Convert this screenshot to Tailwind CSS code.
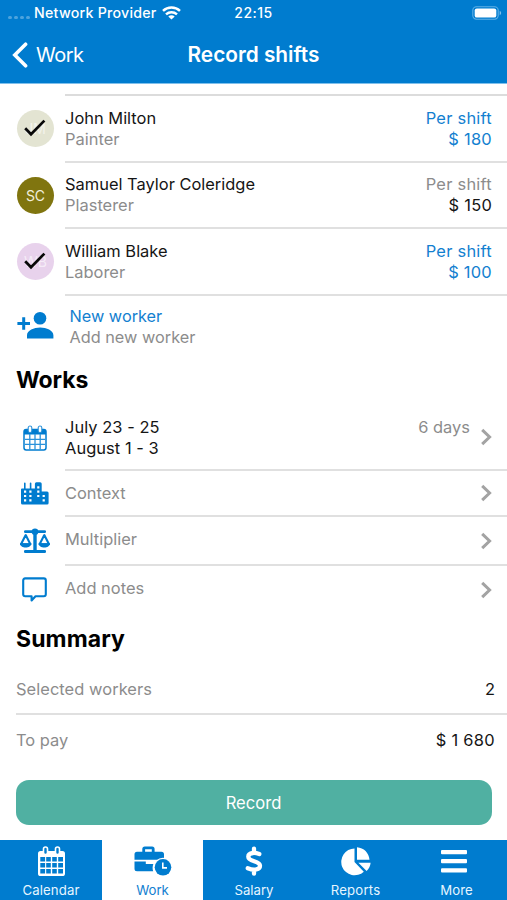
<!DOCTYPE html>
<html lang="en">
<head>
<meta charset="utf-8">
<title>Record shifts</title>
<script src="https://cdn.jsdelivr.net/npm/@tailwindcss/browser@4"></script>
</head>
<body class="bg-white">
<svg class="hidden">
  <symbol id="chev" viewBox="0 0 12 18"><path d="M2.2 1.8 9.6 9 2.2 16.2" fill="none" stroke="#a3a3a3" stroke-width="3"/></symbol>
  <symbol id="check" viewBox="0 0 22 18"><path d="M1.2 9.2 7 15.2 20.4 1.6" fill="none" stroke="#080808" stroke-width="2.7"/></symbol>
</svg>
<div class="flex h-[900px] w-[507px] flex-col overflow-hidden bg-white font-['Inter','Liberation_Sans',sans-serif] text-[16.45px] leading-[21px] text-[#151515]">
  <header class="h-[84px] shrink-0 border-b border-[#7fc0ec] bg-[#007ccf] text-white">
    <div class="grid h-[26px] grid-cols-[190px_127px_190px] items-center text-[14px] font-medium leading-[26px]">
      <div class="flex items-center pl-2 whitespace-nowrap">
        <div class="mt-2 flex w-[26px] shrink-0 gap-[2px]"><i class="h-[3px] w-[4px] rounded-full bg-white/30"></i><i class="h-[3px] w-[4px] rounded-full bg-white/30"></i><i class="h-[3px] w-[4px] rounded-full bg-white/30"></i><i class="h-[3px] w-[4px] rounded-full bg-white/30"></i></div>
        <span class="text-[14.2px] tracking-[0.25px]">Network Provider</span>
        <svg class="ml-[5px] h-[14px] w-[19px] shrink-0" viewBox="0 0 19 14" fill="none" stroke="#fff" stroke-width="2.5"><path d="M1 4.9C5.8.5 13.2.5 18 4.9M4 8.4c3.2-2.8 7.8-2.8 11 0"/><path d="M9.5 13.5 6.3 10.5c1.8-1.7 4.6-1.7 6.4 0Z" fill="#fff" stroke="none"/></svg>
      </div>
      <div class="text-center tracking-[0.5px]">22:15</div>
      <div class="flex justify-end pr-[5px]"><svg class="h-[14px] w-[30px]" viewBox="0 0 30 14"><rect x=".8" y=".8" width="25.4" height="12.4" rx="3.6" fill="none" stroke="#5fb0e6" stroke-width="1.1"/><rect x="2.7" y="2.4" width="21.6" height="9.2" rx="2.2" fill="#fff"/><path d="M27.700 4.800c2 .8 2 3.600 0 4.400Z" fill="#7fc0ec"/></svg></div>
    </div>
    <div class="grid h-[58px] grid-cols-[1fr_auto_1fr] items-center text-[20px]">
      <div class="flex items-center gap-2 pl-[12px]"><svg class="h-[26px] w-[16px]" viewBox="0 0 16 26"><path d="M13.600 2.200 2.800 13l10.800 10.800" fill="none" stroke="#fff" stroke-width="3.600" stroke-linecap="round"/></svg><span class="tracking-[-0.5px]">Work</span></div>
      <div class="pb-[2px] text-[20.800px] font-semibold">Record shifts</div><div></div>
    </div>
  </header>

  <main class="flex shrink-0 flex-col pt-[10px]">
    <div class="ml-[65px] h-[2px] bg-[#dcdcdc]"></div>
    <section class="flex h-[64.6px] items-center pt-px">
      <div class="ml-[17px] grid size-[37px] shrink-0 place-items-center rounded-full bg-[#e3e4d2] text-[14px] text-white/60"><span class="col-start-1 row-start-1">JM</span><svg class="z-10 col-start-1 row-start-1 mr-px mb-[2px] h-[18px] w-[22px]"><use href="#check"/></svg></div>
      <div class="ml-[11px] flex-1"><p>John Milton</p><p class="text-[#8c8c8c]">Painter</p></div>
      <div class="pr-[15px] text-right tracking-[0.25px] text-[#1380d0]"><p>Per shift</p><p>$ 180</p></div>
    </section>
    <div class="ml-[65px] h-[2px] bg-[#e0e0e0]"></div>
    <section class="flex h-[64.6px] items-center pt-px">
      <div class="ml-[17px] grid size-[37px] shrink-0 place-items-center rounded-full bg-[#80750f] text-[14px] text-[#f1efdc]">SC</div>
      <div class="ml-[11px] flex-1"><p>Samuel Taylor Coleridge</p><p class="text-[#8c8c8c]">Plasterer</p></div>
      <div class="pr-[15px] text-right tracking-[0.25px]"><p class="text-[#8c8c8c]">Per shift</p><p>$ 150</p></div>
    </section>
    <div class="ml-[65px] h-[2px] bg-[#e0e0e0]"></div>
    <section class="flex h-[64.6px] items-center pt-px">
      <div class="ml-[17px] grid size-[37px] shrink-0 place-items-center rounded-full bg-[#e8d2ec] text-[14px] text-white/60"><span class="col-start-1 row-start-1">WB</span><svg class="z-10 col-start-1 row-start-1 mr-px mb-[2px] h-[18px] w-[22px]"><use href="#check"/></svg></div>
      <div class="ml-[11px] flex-1"><p>William Blake</p><p class="text-[#8c8c8c]">Laborer</p></div>
      <div class="pr-[15px] text-right tracking-[0.25px] text-[#1380d0]"><p>Per shift</p><p>$ 100</p></div>
    </section>
    <div class="ml-[65px] h-[2px] bg-[#e0e0e0]"></div>
    <section class="flex h-[61px] items-center pt-px">
      <svg class="mb-[4px] ml-[17px] h-[28px] w-[37px] shrink-0" viewBox="0 0 37 28" fill="#007ccf"><circle cx="23" cy="7.300" r="6.300"/><path d="M10 27.500v-3.300c0-4.600 7-7.600 13.200-7.600s13.200 3 13.200 7.600v3.300ZM5.200 6.200h3v4.900H13v3H8.200v4.700h-3v-4.700H.4v-3h4.800Z"/></svg>
      <div class="ml-[15.500px] text-[16.300px]"><p class="text-[#1380d0]">New worker</p><p class="text-[#8c8c8c]">Add new worker</p></div>
    </section>

    <h2 class="flex h-[49px] items-center pb-[2px] pl-[16px] text-[23px] font-bold leading-[28px] tracking-[-0.1px] text-black">Works</h2>
    <section class="flex h-[63px] items-center pt-px">
      <svg class="ml-[23px] h-[26px] w-[24px] shrink-0" viewBox="0 0 24 26"><rect x="1" y="4.500" width="22" height="20.500" rx="2.200" fill="#fff" stroke="#007ccf" stroke-width="1.500"/><path d="M1 9.500V6q0-1.600 1.600-1.600h18.800Q23 4.400 23 6v3.500Z" fill="#007ccf"/><path d="M2 14.400h20M2 19.300h20M6.800 9v15.500M12 9v15.500M17.200 9v15.500" stroke="#2b92da" stroke-width="1.300"/><rect x="5.200" y="1" width="3.600" height="6.500" rx="1.800" fill="#fff" stroke="#2b92da" stroke-width="1.100"/><rect x="15.200" y="1" width="3.600" height="6.500" rx="1.800" fill="#fff" stroke="#2b92da" stroke-width="1.100"/></svg>
      <div class="ml-[18px] flex-1 tracking-[0.05px]"><p>July 23 - 25</p><p>August 1 - 3</p></div>
      <p class="mr-[10px] self-start pt-[10.500px] text-[#8c8c8c]">6 days</p>
      <svg class="mr-[15px] mb-px h-[18px] w-[12px]"><use href="#chev"/></svg>
    </section>
    <div class="ml-[65px] h-[2px] bg-[#e0e0e0]"></div>
    <section class="flex h-[44px] items-center pt-px">
      <svg class="ml-[21px] h-[23px] w-[28px] shrink-0" viewBox="0 0 28 23"><path d="M0 21V7.500Q0 6.500 1 6.500h2V1.300q0-.9.800-.9t.8.900v5.200h4.200V1.300q0-.9.800-.9t.8.900v5.200h3.500V1.800Q13.900.3 15.400.3h3.800q1.500 0 1.500 1.500v7.700h5.400q1.500 0 1.500 1.500v10q0 1.500-1.500 1.500H1.500Q0 22.500 0 21Z" fill="#007ccf"/><g fill="#fff"><path d="M3 8.500h2.200v2.200H3zm5.300 0h2.200v2.200H8.300zM3 12.900h2.200v2.200H3zm5.300 0h2.200v2.200H8.300zM3 17.200h2.200v2.200H3zm5.300 0h2.200v2.200H8.300zM16.200 4.200h2.200v2.200h-2.200zm0 4.300h2.200v2.200h-2.200zm0 4.400h2.200v2.200h-2.200zm5.400 0h2.200v2.200h-2.200zm0 4.300h2.200v2.200h-2.200z"/></g></svg>
      <p class="ml-[16px] flex-1 text-[#8c8c8c]">Context</p><svg class="mr-[15px] mb-px h-[18px] w-[12px]"><use href="#chev"/></svg>
    </section>
    <div class="ml-[65px] h-[2px] bg-[#e0e0e0]"></div>
    <section class="flex h-[47px] items-center pt-px">
      <svg class="mt-px ml-[20px] h-[26px] w-[30px] shrink-0" viewBox="0 0 30 26" fill="#007ccf"><rect x="4" y="2.200" width="22" height="2.900" rx="1.300"/><circle cx="15" cy="3.800" r="3.300"/><path d="M13.300 4h3.400v19h-3.400z"/><rect x="4" y="22" width="22" height="3" rx="1.300"/><path d="M5.700 7.100 1 16.200h9.400ZM24.300 7.100l-4.700 9.100H29Z" fill="none" stroke="#007ccf" stroke-width="2.100" stroke-linejoin="round"/><path d="M0 15.200h11.400c0 5.700-11.400 5.700-11.400 0ZM18.600 15.200H30c0 5.700-11.400 5.700-11.400 0Z"/></svg>
      <p class="mb-[2px] ml-[15px] flex-1 text-[#8c8c8c]">Multiplier</p><svg class="mr-[15px] h-[18px] w-[12px]"><use href="#chev"/></svg>
    </section>
    <div class="ml-[65px] h-[2px] bg-[#e0e0e0]"></div>
    <section class="flex h-[47px] items-center pt-px">
      <svg class="mt-px ml-[22px] h-[26px] w-[25px] shrink-0" viewBox="0 0 25 26"><path d="M3.200 1.400h18.600q2 0 2 2v13.800q0 2-2 2h-8.300l-3.900 4.300v-4.300H3.200q-2 0-2-2V3.400q0-2 2-2Z" fill="none" stroke="#007ccf" stroke-width="2.100" stroke-linejoin="round"/></svg>
      <p class="mb-[2px] ml-[18px] flex-1 text-[#8c8c8c]">Add notes</p><svg class="mr-[15px] h-[18px] w-[12px]"><use href="#chev"/></svg>
    </section>

    <h2 class="flex h-[52px] items-center pt-px pl-[16px] text-[23px] font-bold leading-[28px] tracking-[0.1px] text-black">Summary</h2>
    <div class="flex h-[48.500px] items-center justify-between pr-[12px] pl-[16px]"><span class="tracking-[0.050px] text-[#8c8c8c]">Selected workers</span><span>2</span></div>
    <div class="ml-[16px] h-[2px] bg-[#e0e0e0]"></div>
    <div class="flex h-[50px] items-center justify-between pr-[12px] pl-[16px]"><span class="text-[#8c8c8c]">To pay</span><span class="tracking-[0.3px]">$ 1 680</span></div>
    <button class="mx-[15.500px] mt-[15px] h-[45px] rounded-[13px] bg-[#50b0a2] pt-px text-[16.600px] text-white">Record</button>
  </main>

  <nav class="mt-auto grid h-[60px] shrink-0 grid-cols-[102px_101px_102px_101px_101px] bg-[#007ccf] text-[13.200px] leading-[16px] text-[#e6f5ff]">
    <a class="flex flex-col items-center pt-[6px]"><svg class="h-[31px] w-[29px]" viewBox="0 0 29 31"><rect x="1" y="5" width="27" height="25" rx="2.600" fill="#fff"/><path d="M3.300 11h4.800v4.500H3.300zm5.900 0h4.600v4.500H9.200zm6 0h4.600v4.500h-4.600zm6 0H26v4.500h-4.800zM3.300 17h4.800v4.600H3.300zm5.900 0h4.600v4.600H9.200zm6 0h4.600v4.600h-4.600zm6 0H26v4.600h-4.800zM3.300 23.100h4.800v4.500H3.300zm5.900 0h4.600v4.500H9.200zm6 0h4.600v4.500h-4.600zm6 0H26v4.500h-4.800z" fill="#007ccf"/><g fill="#007ccf" stroke="#fff" stroke-width="1.600"><rect x="6.500" y="1" width="4" height="7.500" rx="2"/><rect x="18.500" y="1" width="4" height="7.500" rx="2"/></g></svg><span class="mt-[5px] tracking-[0.100px]">Calendar</span></a>
    <a class="flex flex-col items-center bg-white pt-[6px] text-[#1380d0]"><svg class="h-[31px] w-[38px]" viewBox="0 0 38 31"><path d="M3 5.800h5.300V3q0-2.500 2.500-2.500h7.300Q20.600.5 20.600 3v2.800h6.900q2.500 0 2.500 2.500v5.500H.5V8.300Q.5 5.800 3 5.800Zm8.100 0h6.700V3.200h-6.700ZM.5 15.400h11.300v2.500h7.600c-1 2.500-1 5-.2 7.400H3Q.5 25.300.5 22.800Z" fill="#007ccf" fill-rule="evenodd"/><circle cx="29" cy="21.300" r="9.600" fill="#fff"/><circle cx="29" cy="21.300" r="8.300" fill="#007ccf"/><path d="M28.800 16.500v5.400h4.200" fill="none" stroke="#fff" stroke-width="1.600"/></svg><span class="mt-[5px]">Work</span></a>
    <a class="flex flex-col items-center pt-[6px]"><svg class="h-[31px] w-[20px]" viewBox="0 0 20 31"><path d="M10 2.600v4M10 24.500v3.200M15.300 8.100C13 7.200 10.800 6.700 8.800 7 5.900 7.400 4.300 8.800 4.300 10.700c0 5.600 11.700 3.400 11.700 9 0 3.900-5.700 5.300-12.200 2.500" fill="none" stroke="#fff" stroke-width="4.300" stroke-linecap="round"/></svg><span class="mt-[5px]">Salary</span></a>
    <a class="flex flex-col items-center pt-[6px]"><svg class="h-[31px] w-[30px]" viewBox="0 0 30 31" fill="#fff"><path d="M13.500 2.500v13.600l9.300 9.600A13.400 13.400 0 1 1 13.500 2.500Z"/><path d="M16 1.300c6.800.5 12 5.600 12.500 12.500H16ZM17.400 16.700h12.200c-.2 3.200-1.700 6.200-4 8.300Z"/></svg><span class="mt-[5px] tracking-[0.200px]">Reports</span></a>
    <a class="flex flex-col items-center pt-[6px]"><svg class="mr-[5px] h-[31px] w-[28px]" viewBox="0 0 28 31" fill="#fff"><rect x="1" y="4" width="26" height="4.200" rx="1"/><rect x="1" y="13.100" width="26" height="4.200" rx="1"/><rect x="1" y="22.200" width="26" height="4.200" rx="1"/></svg><span class="mt-[5px]">More</span></a>
  </nav>
</div>
</body>
</html>
